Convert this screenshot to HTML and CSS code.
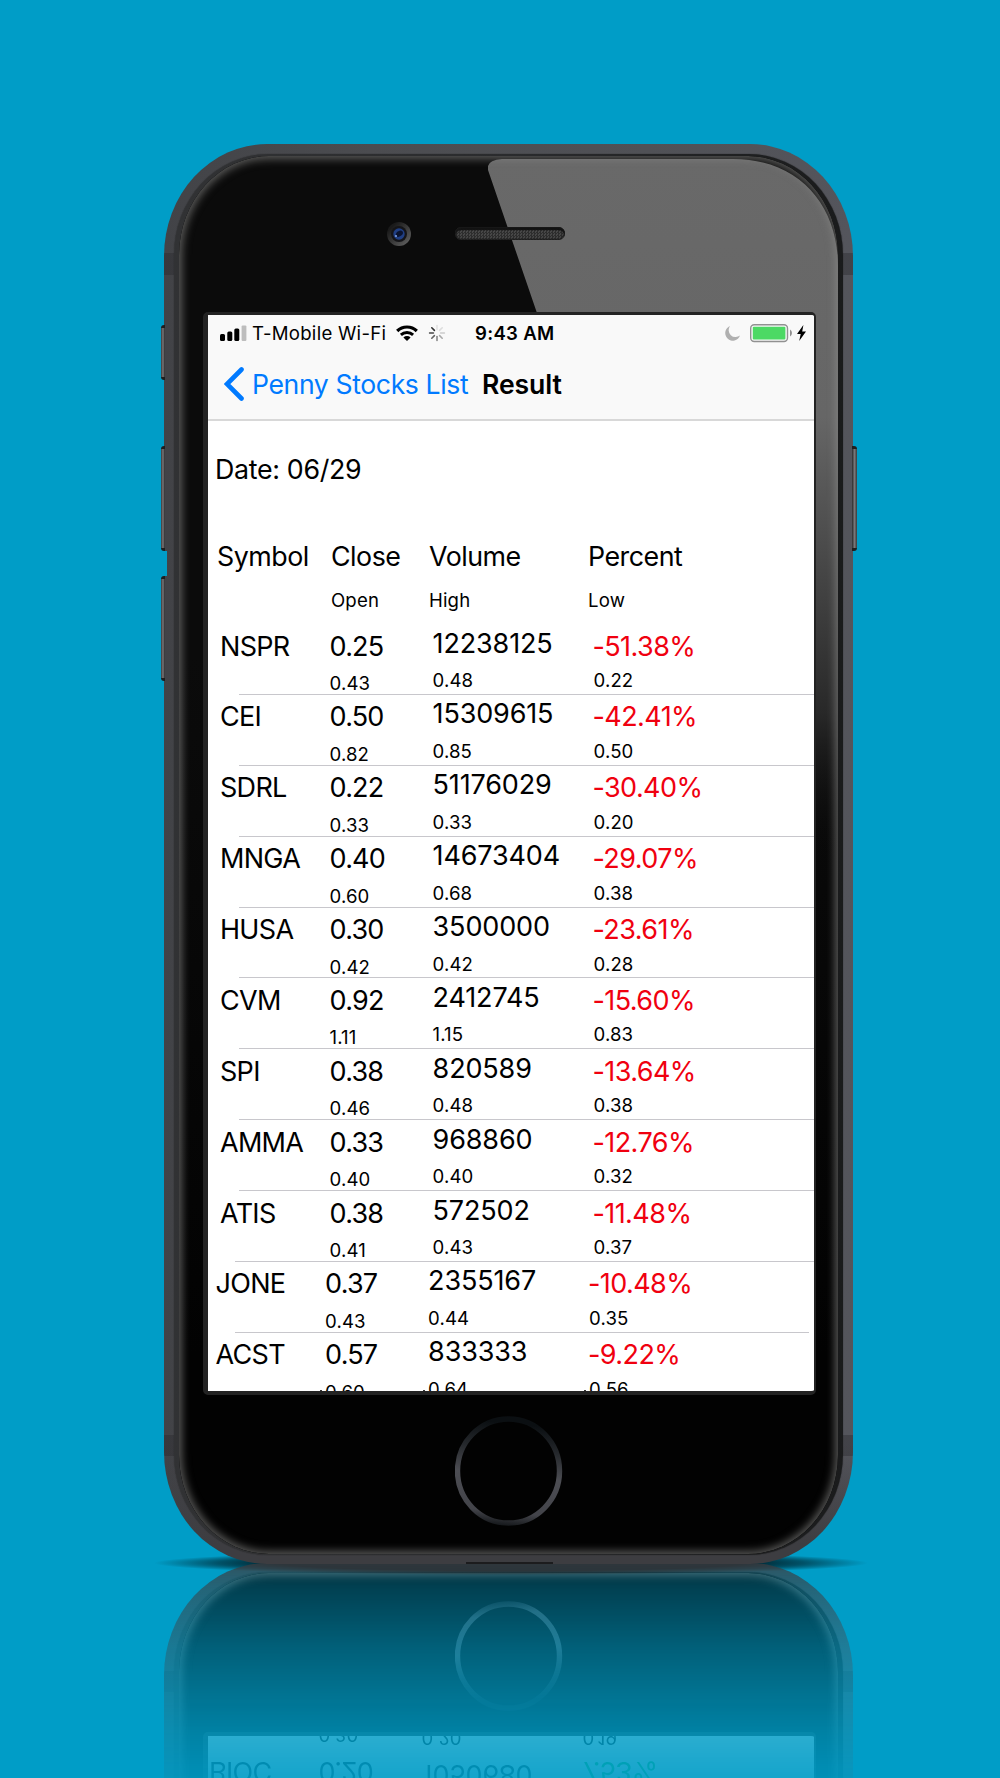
FILE: index.html
```html
<!doctype html>

<html lang="en">
<head>
    <meta charset="utf-8">
    <title>Penny Stocks List</title>
    <link rel="stylesheet" href="styles.css">
</head>

<body>
    <div class="stage">
        <div class="ground-shadow"></div>

        <div class="phone">
            <div class="side-button mute"></div>
            <div class="side-button volume-up"></div>
            <div class="side-notch"></div>
            <div class="side-button volume-down"></div>
            <div class="side-button power"></div>
            <div class="slit"></div>

            <div class="rim">
                <div class="face">
                    <svg class="glare" width="350" height="900" viewBox="0 0 350 900">
                        <defs>
                            <linearGradient id="fade" x1="0" y1="0" x2="0" y2="900" gradientUnits="userSpaceOnUse">
                                <stop offset="0" stop-color="#696969"/>
                                <stop offset=".29" stop-color="#666"/>
                                <stop offset=".45" stop-color="#484848"/>
                                <stop offset=".62" stop-color="#282828"/>
                                <stop offset=".78" stop-color="#0a0a0a" stop-opacity="0"/>
                            </linearGradient>
                        </defs>
                        <path d="M0 14 Q-2 4 14 3 L245 3 C312 3 350 50 350 110 L350 900 L230 900 L50 160 Z" fill="url(#fade)"/>
                    </svg>

                    <div class="ear">
                        <svg class="camera" width="24" height="24" viewBox="0 0 24 24">
                            <defs>
                                <linearGradient id="lens" x1="0" y1="0" x2="1" y2="1">
                                    <stop offset=".2" stop-color="#1a1a1a"/>
                                    <stop offset="1" stop-color="#686868"/>
                                </linearGradient>
                            </defs>
                            <circle cx="12" cy="12" r="12" fill="url(#lens)"/>
                            <circle cx="12" cy="12" r="8" fill="#151518"/>
                            <circle cx="12" cy="12" r="5.7" fill="#203f84"/>
                            <ellipse cx="12.5" cy="12" rx="3.8" ry="2.6" fill="#0b1430" transform="rotate(-35 12 12)"/>
                            <circle cx="9" cy="14" r="1.1" fill="#7d9fe0"/>
                        </svg>
                        <div class="speaker"></div>
                    </div>

                    <div class="screen">
                        <div class="top-bar">
                            <div class="status">
                                <svg class="signal" width="27" height="17" viewBox="0 0 27 17">
                                    <rect x="0" y="9" width="5" height="7" rx="1.5"/>
                                    <rect x="7.3" y="6.5" width="5" height="9.5" rx="1.5"/>
                                    <rect x="14.3" y="3.5" width="5" height="12.5" rx="1.5"/>
                                    <rect x="21.6" y="0.4" width="4.8" height="15.6" rx="1" fill="#bdbdbd"/>
                                </svg>
                                <span class="carrier">T-Mobile Wi-Fi</span>
                                <svg class="wifi" width="22" height="16" viewBox="0 0 22 16">
                                    <path d="M1.2 6 A14 14 0 0 1 20.8 6" fill="none" stroke="#000" stroke-width="3.2"/>
                                    <path d="M4.9 9.9 A8.8 8.8 0 0 1 17.1 9.9" fill="none" stroke="#000" stroke-width="2.9"/>
                                    <path d="M7.4 12.4 A5.2 5.2 0 0 1 14.6 12.4 L11 16 Z"/>
                                </svg>
                                <svg class="spinner" width="18" height="18" viewBox="-9 -9 18 18">
                                    <g stroke-width="1.6" stroke-linecap="round">
                                        <path d="M0 -3.6 V-7.4" stroke="#e2e2e2"/>
                                        <path d="M2.6 -2.6 L5.2 -5.2" stroke="#ddd"/>
                                        <path d="M3.6 0 H7.4" stroke="#ccc"/>
                                        <path d="M2.6 2.6 L5.2 5.2" stroke="#aaa"/>
                                        <path d="M0 3.6 V7.4" stroke="#888"/>
                                        <path d="M-2.6 2.6 L-5.2 5.2" stroke="#666"/>
                                        <path d="M-3.6 0 H-7.4" stroke="#444"/>
                                        <path d="M-2.6 -2.6 L-5.2 -5.2" stroke="#333"/>
                                    </g>
                                </svg>
                                <span class="time">9:43 AM</span>
                                <svg class="moon" width="15" height="15" viewBox="0 0 15 15">
                                    <path d="M5 0 A7.6 7.6 0 1 0 15 9.6 A7 7 0 0 1 5 0 Z" fill="#b0b0b0"/>
                                </svg>
                                <svg class="battery" width="43" height="19" viewBox="0 0 43 19">
                                    <rect x=".7" y=".7" width="36.8" height="16.8" rx="3.5" fill="none" stroke="#919191" stroke-width="1.4"/>
                                    <rect x="2.8" y="2.8" width="32.6" height="12.6" rx="1" fill="#4cd964"/>
                                    <path d="M40 5.6 Q42 7 42 9.1 Q42 11.2 40 12.6 Z" fill="#919191"/>
                                </svg>
                                <svg class="bolt" width="9" height="16" viewBox="0 0 9 16">
                                    <path d="M6.4 0 L0 9 H3.7 L2.2 16 L9 6.4 H5.2 Z"/>
                                </svg>
                            </div>
                            <div class="nav">
                                <svg class="chevron" width="20" height="34" viewBox="0 0 20 34">
                                    <path d="M17.5 2.5 L3 17 L17.5 31.5" fill="none" stroke="#007aff" stroke-width="4.6" stroke-linecap="round"/>
                                </svg>
                                <span class="back">Penny Stocks List</span>
                                <span class="title">Result</span>
                            </div>
                        </div>

                        <div class="date">Date: 06/29</div>

                        <div class="head">
                            <div><span>Symbol</span></div>
                            <div><span>Close</span><small>Open</small></div>
                            <div><span>Volume</span><small>High</small></div>
                            <div><span>Percent</span><small>Low</small></div>
                        </div>

                        <div class="row">
                            <div class="symbol">NSPR</div>
                            <div class="close">0.25<small>0.43</small></div>
                            <div class="volume">12238125<small>0.48</small></div>
                            <div class="percent"><span>-51.38%</span><small>0.22</small></div>
                        </div>
                        <div class="row">
                            <div class="symbol">CEI</div>
                            <div class="close">0.50<small>0.82</small></div>
                            <div class="volume">15309615<small>0.85</small></div>
                            <div class="percent"><span>-42.41%</span><small>0.50</small></div>
                        </div>
                        <div class="row">
                            <div class="symbol">SDRL</div>
                            <div class="close">0.22<small>0.33</small></div>
                            <div class="volume">51176029<small>0.33</small></div>
                            <div class="percent"><span>-30.40%</span><small>0.20</small></div>
                        </div>
                        <div class="row">
                            <div class="symbol">MNGA</div>
                            <div class="close">0.40<small>0.60</small></div>
                            <div class="volume">14673404<small>0.68</small></div>
                            <div class="percent"><span>-29.07%</span><small>0.38</small></div>
                        </div>
                        <div class="row">
                            <div class="symbol">HUSA</div>
                            <div class="close">0.30<small>0.42</small></div>
                            <div class="volume">3500000<small>0.42</small></div>
                            <div class="percent"><span>-23.61%</span><small>0.28</small></div>
                        </div>
                        <div class="row">
                            <div class="symbol">CVM</div>
                            <div class="close">0.92<small>1.11</small></div>
                            <div class="volume">2412745<small>1.15</small></div>
                            <div class="percent"><span>-15.60%</span><small>0.83</small></div>
                        </div>
                        <div class="row">
                            <div class="symbol">SPI</div>
                            <div class="close">0.38<small>0.46</small></div>
                            <div class="volume">820589<small>0.48</small></div>
                            <div class="percent"><span>-13.64%</span><small>0.38</small></div>
                        </div>
                        <div class="row">
                            <div class="symbol">AMMA</div>
                            <div class="close">0.33<small>0.40</small></div>
                            <div class="volume">968860<small>0.40</small></div>
                            <div class="percent"><span>-12.76%</span><small>0.32</small></div>
                        </div>
                        <div class="row next-inset">
                            <div class="symbol">ATIS</div>
                            <div class="close">0.38<small>0.41</small></div>
                            <div class="volume">572502<small>0.43</small></div>
                            <div class="percent"><span>-11.48%</span><small>0.37</small></div>
                        </div>
                        <div class="row inset">
                            <div class="symbol">JONE</div>
                            <div class="close">0.37<small>0.43</small></div>
                            <div class="volume">2355167<small>0.44</small></div>
                            <div class="percent"><span>-10.48%</span><small>0.35</small></div>
                        </div>
                        <div class="row inset last">
                            <div class="symbol">ACST</div>
                            <div class="close">0.57<small>0.60</small></div>
                            <div class="volume">833333<small>0.64</small></div>
                            <div class="percent"><span>-9.22%</span><small>0.56</small></div>
                        </div>
                    </div>

                    <svg class="home" width="108" height="110" viewBox="0 0 108 110">
                        <defs>
                            <linearGradient id="ring" x1="0.1" y1="0" x2="0" y2="1">
                                <stop offset="0" stop-color="#0b0f12"/>
                                <stop offset=".25" stop-color="#26292d"/>
                                <stop offset=".5" stop-color="#4c4d53"/>
                                <stop offset=".85" stop-color="#43444a"/>
                                <stop offset="1" stop-color="#0e1114"/>
                            </linearGradient>
                        </defs>
                        <ellipse cx="53.5" cy="55" rx="51" ry="52" fill="none" stroke="url(#ring)" stroke-width="5.4"/>
                    </svg>
                </div>
            </div>
        </div>

        <div class="reflection">
            <div class="phone flipped">
                <div class="rim">
                    <div class="face">
                        <div class="ear"></div>
                        <div class="screen">
                            <div class="row">
                                <div class="symbol">BIOC</div>
                                <div class="close">0.20<small>0.30</small></div>
                                <div class="volume">1050680<small>0.20</small></div>
                                <div class="percent up"><span>7.53%</span><small>0.19</small></div>
                            </div>
                        </div>
                        <svg class="home" width="108" height="110" viewBox="0 0 108 110">
                            <ellipse cx="53.5" cy="55" rx="51" ry="52" fill="none" stroke="url(#ring)" stroke-width="5.4"/>
                        </svg>
                    </div>
                </div>
            </div>
        </div>
    </div>
</body>
</html>
```

FILE: styles.css
```css
body {
    margin: 0;
    background-color: #009dc7;
    font-family: Inter, "Liberation Sans", sans-serif;
    color: #000000;
}

.stage {
    position: relative;
    box-sizing: border-box;
    width: 1000px;
    height: 1778px;
    padding: 144px 0 0 164px;
    overflow: hidden;
}

/* phone body */

.phone {
    position: relative;
    box-sizing: border-box;
    width: 689px;
    height: 1420px;
    padding: 10px 10px 9px 10px;
    border-radius: 103px / 112px;
    background:
        linear-gradient(transparent 109px, rgba(40, 40, 44, .4) 109px, rgba(40, 40, 44, .4) 131px, transparent 131px),
        linear-gradient(transparent 1291px, rgba(40, 40, 44, .4) 1291px, rgba(40, 40, 44, .4) 1312px, transparent 1312px),
        linear-gradient(transparent 1300px, #3d3d41 1400px),
        linear-gradient(90deg, #424347, #4b4c50 30%, #505156 70%, #54555c);
}

.rim {
    box-sizing: border-box;
    height: 1401px;
    padding: 2px 5px 1px 5px;
    border-radius: 94px / 101px;
    background: linear-gradient(90deg, #313234, #2a2b2d 50%, #1a1b1c);
    box-shadow: 0 0 1px #1a1a1a;
}

.face {
    position: relative;
    display: flex;
    flex-direction: column;
    height: 1398px;
    border-radius: 90px / 99px;
    overflow: hidden;
    background: linear-gradient(#0b0b0b, #0b0b0b 500px, #020202 1200px);
}

.face::after {
    content: "";
    position: absolute;
    inset: 0;
    border-radius: 90px / 99px;
    box-shadow: inset 0 0 9px 3px rgba(140, 140, 138, .62);
}

.glare {
    position: absolute;
    top: 0;
    left: 309px;
}

.ear {
    position: relative;
    display: flex;
    flex: 0 0 156px;
    align-items: flex-start;
    gap: 44px;
    padding-left: 208px;
}

.camera {
    margin-top: 66px;
}

.speaker {
    width: 110px;
    height: 13px;
    margin-top: 71px;
    border-radius: 7px;
    background: repeating-conic-gradient(#2d2d2d 0 25%, #474747 0 50%) 0 0 / 3px 3px;
    box-shadow: inset 0 0 2px 1px #1a1a1a, inset 0 3px 1px #111111;
}

.side-button {
    position: absolute;
    left: -3px;
    box-sizing: border-box;
    width: 4px;
    height: 105px;
    border: solid #1f1f1f;
    border-width: 3px 0;
    border-radius: 3px 0 0 3px;
    background: linear-gradient(90deg, #3a3a3a, #77777a, #2a2a2a);
}

.mute {
    top: 181px;
    height: 55px;
}

.volume-up {
    top: 302px;
}

.volume-down {
    top: 432px;
}

.side-notch {
    position: absolute;
    top: 407px;
    left: 0;
    width: 3px;
    height: 25px;
    background-color: #009dc7;
}

.power {
    top: 302px;
    left: 688px;
    width: 5px;
    border-radius: 0 3px 3px 0;
    background: linear-gradient(90deg, #2a2a2a, #77777a, #3a3a3a);
}

.slit {
    position: absolute;
    bottom: 0;
    left: 302px;
    width: 87px;
    height: 2px;
    background-color: #1c1c1e;
}

.home {
    display: block;
    margin: 21px auto 0;
}

/* app */

.screen {
    position: relative;
    box-sizing: border-box;
    flex: 0 0 1083px;
    width: 613px;
    margin-left: 24px;
    border: solid #232323;
    border-width: 3px 2px 4px 5px;
    border-radius: 5px;
    background-color: #ffffff;
    overflow: hidden;
}

.top-bar {
    box-sizing: border-box;
    height: 106px;
    border-bottom: 2px solid #d8d8d8;
    background-color: #f9f9f9;
}

.status {
    display: flex;
    align-items: center;
    height: 36px;
    padding-left: 12px;
    font-size: 18.6px;
    white-space: nowrap;
}

.carrier {
    width: 144px;
    margin-left: 5px;
    letter-spacing: .27px;
}

.spinner {
    margin-left: 10px;
}

.time {
    width: 250px;
    margin-left: 29px;
    font-weight: 600;
    letter-spacing: .3px;
}

.battery {
    margin-left: 10px;
}

.bolt {
    margin-left: 4px;
}

.nav {
    display: flex;
    align-items: center;
    height: 66px;
    padding-left: 16px;
    font-size: 26.6px;
    white-space: nowrap;
}

.back {
    width: 230px;
    margin-left: 8px;
    letter-spacing: -.38px;
    color: #007aff;
}

.title {
    font-weight: 600;
    letter-spacing: -.1px;
}

.date {
    padding: 27px 0 0 7px;
    font-size: 26.8px;
    line-height: 43px;
    letter-spacing: -.32px;
}

.head {
    display: grid;
    grid-template-columns: 114px 98px 159px 1fr;
    height: 83px;
    padding: 50px 0 0 9px;
    font-size: 26.8px;
    line-height: 30px;
    letter-spacing: -.5px;
}

.head div {
    display: flex;
    flex-direction: column;
}

.head small {
    margin-top: 17px;
    font-size: 18.6px;
    line-height: 24px;
    letter-spacing: .15px;
}

.row {
    position: relative;
    display: grid;
    grid-template-columns: 109px 103px 160px 1fr;
    height: 70.875px;
    padding-left: 12px;
    font-size: 27px;
    line-height: 35px;
}

.row::after {
    content: "";
    position: absolute;
    right: 0;
    bottom: 0;
    left: 31px;
    height: 1px;
    background-color: #c8c7cc;
}

.row.inset {
    padding-left: 7.5px;
}

.row.next-inset::after {
    left: 27px;
}

.row.inset::after {
    right: 5px;
    left: 27px;
}

.row div {
    padding-top: 4.5px;
}

.row .symbol {
    letter-spacing: -.7px;
}

.row .close {
    padding-left: .6px;
    letter-spacing: -.8px;
}

.row .volume {
    padding-top: 1.5px;
    padding-left: .6px;
    letter-spacing: -.15px;
}

.row .percent {
    padding-left: .4px;
    letter-spacing: -.55px;
}

.row small {
    display: block;
    margin-top: 9.5px;
    font-size: 18.6px;
    line-height: 20px;
    letter-spacing: .1px;
}

.percent span {
    color: #f0000f;
}

.percent.up span {
    color: #00c030;
}

.row .percent small {
    margin-top: 6.5px;
    padding-left: 1.2px;
}

/* tips of the row sliding in underneath */
.last small::before {
    content: "";
    position: absolute;
    bottom: 12px;
    width: 2px;
    height: 2px;
    margin-left: -5px;
    background-color: #333333;
}

/* floor */

.ground-shadow {
    position: absolute;
    top: 1551px;
    left: 154px;
    width: 714px;
    height: 24px;
    background: radial-gradient(closest-side, #00222c 65%, rgba(0, 50, 64, .7) 82%, transparent);
}

.reflection {
    position: relative;
    height: 215px;
    overflow: hidden;
    -webkit-mask-image: linear-gradient(rgba(0, 0, 0, .76), rgba(0, 0, 0, .6) 22px, rgba(0, 0, 0, .4) 82px, rgba(0, 0, 0, .17) 170px, rgba(0, 0, 0, .08));
    mask-image: linear-gradient(rgba(0, 0, 0, .76), rgba(0, 0, 0, .6) 22px, rgba(0, 0, 0, .4) 82px, rgba(0, 0, 0, .17) 170px, rgba(0, 0, 0, .08));
}

.flipped {
    margin-top: -1px;
    transform: scaleY(-1);
}

.flipped .screen {
    display: flex;
    flex-direction: column;
    justify-content: flex-end;
}

.flipped .row {
    flex: none;
    margin-bottom: -13px;
    padding-left: 1px;
}
```
